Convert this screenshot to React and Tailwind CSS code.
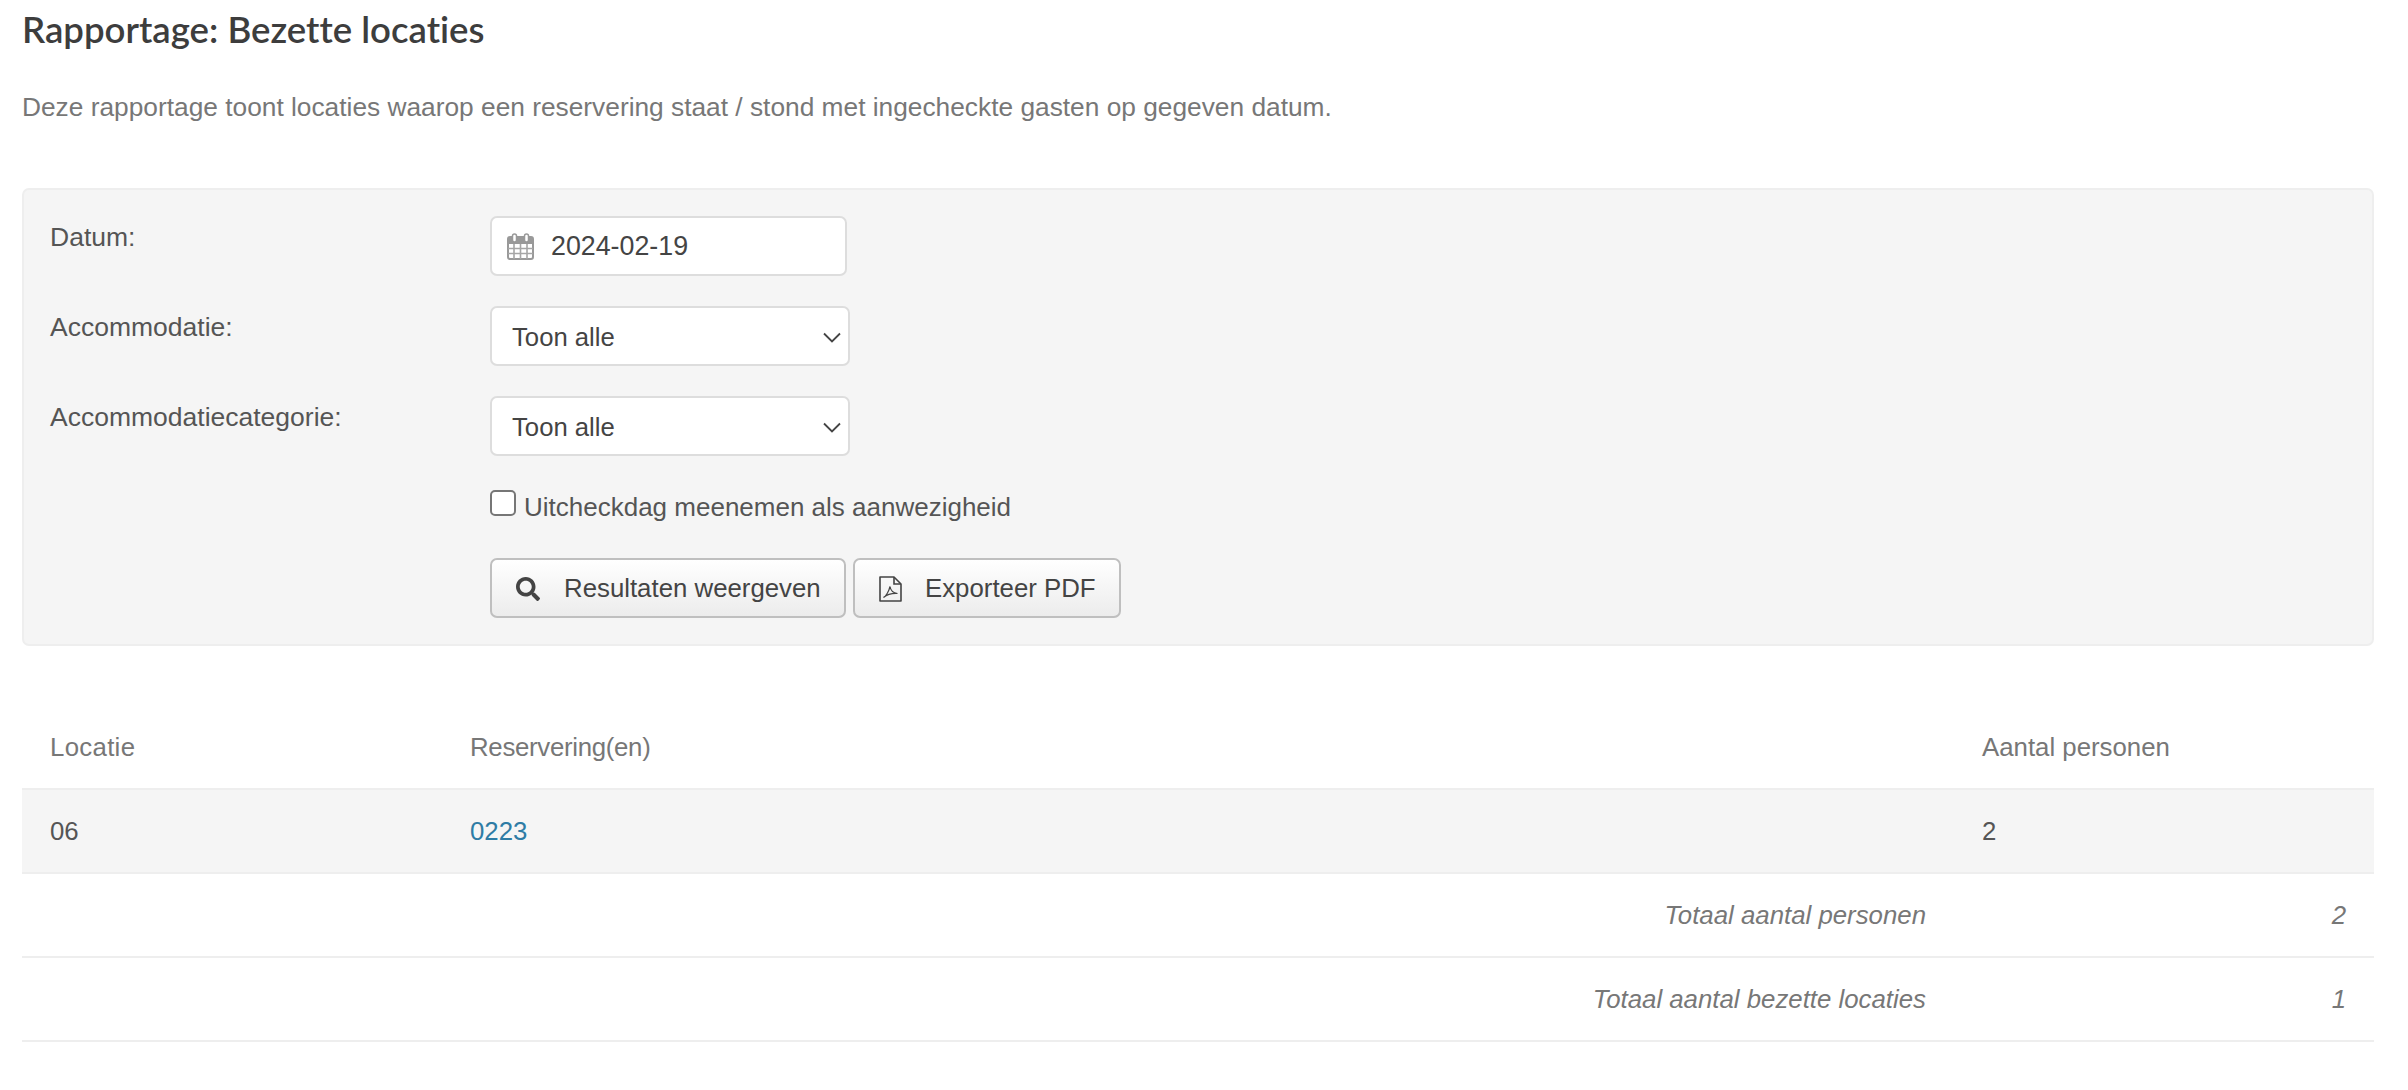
import React from "react";
import { FaSearch } from "react-icons/fa";

function Calendar() {
  return (
    <svg width="27" height="27" viewBox="0 0 27 27" className="shrink-0">
      <rect x="1" y="4" width="25" height="22" rx="2" fill="#fff" stroke="#999" strokeWidth="2" />
      <rect x="1" y="4" width="25" height="7" fill="#999" />
      <path d="M1 15.5H26M1 20.5H26M7 11V26M13.5 11V26M20 11V26" stroke="#a6a6a6" strokeWidth="1.6" fill="none" />
      <rect x="5.5" y="1" width="4" height="8" rx="2" fill="#fff" stroke="#999" strokeWidth="1.5" />
      <rect x="17.5" y="1" width="4" height="8" rx="2" fill="#fff" stroke="#999" strokeWidth="1.5" />
    </svg>
  );
}

function Pdf() {
  return (
    <svg width="23" height="26" viewBox="0 0 23 26" className="mr-[23px] shrink-0">
      <path d="M1 1H15L22 8V25H1Z" fill="none" stroke="#444" strokeWidth="1.6" strokeLinejoin="round" />
      <path d="M15 1V8H22" fill="none" stroke="#444" strokeWidth="1.6" />
      <path d="M4.5 21.5C7 20.5 10 15 11 10.5C11.5 14 14 17 18.5 17.5C14.5 17.3 8 18.5 4.5 21.5Z" fill="none" stroke="#444" strokeWidth="1.2" />
    </svg>
  );
}

function Chevron() {
  return (
    <svg width="18" height="11" viewBox="0 0 18 11" className="pointer-events-none absolute right-[7px] top-[24px]">
      <path d="M1 1.5L9 9.5L17 1.5" fill="none" stroke="#444" strokeWidth="1.8" />
    </svg>
  );
}

function SelectField({ label }) {
  return (
    <div className="mb-[30px] flex h-[60px]">
      <div className="w-[440px] pt-[3px] text-[26.5px] leading-[36px]">{label}</div>
      <div className="relative h-[60px] w-[360px] rounded-[7px] border-2 border-[#dddddd] bg-white pl-[20px] text-[25.7px] leading-[58px] text-[#444444]">
        Toon alle
        <Chevron />
      </div>
    </div>
  );
}

function Button({ icon, text, className }) {
  return (
    <button className={`flex h-[60px] items-center rounded-[7px] border-2 border-[#bfbfbf] bg-gradient-to-b from-white to-[#ececec] pt-[1px] text-[25.8px] text-[#444444] ${className}`}>
      {icon}
      <span>{text}</span>
    </button>
  );
}

export default function App() {
  return (
    <div className="min-h-[1090px] bg-white pl-[22px] pr-[34px] font-['Liberation_Sans',Arial,sans-serif] text-[25.8px] text-[#555555]">
      <h1 className="h-[60px] pt-[9px] font-['Lato',sans-serif] text-[36.6px] font-semibold leading-[40px] text-[#3d3d3d] [font-variant-ligatures:none]">
        Rapportage: Bezette locaties
      </h1>
      <p className="mt-[29px] h-[36px] text-[26.3px] leading-[36px] text-[#777777]">
        Deze rapportage toont locaties waarop een reservering staat / stond met ingecheckte gasten op gegeven datum.
      </p>
      <div className="mt-[63px] h-[458px] rounded-[7px] border-2 border-[#eeeeee] bg-[#f5f5f5] pl-[26px] pt-[26px]">
        <div className="mb-[30px] flex h-[60px]">
          <div className="w-[440px] pt-[3px] text-[26.5px] leading-[36px]">Datum:</div>
          <div className="flex h-[60px] w-[357px] items-center rounded-[7px] border-2 border-[#dddddd] bg-white pl-[15px] text-[26.8px] text-[#444444]">
            <Calendar />
            <span className="ml-[17px]">2024-02-19</span>
          </div>
        </div>
        <SelectField label="Accommodatie:" />
        <SelectField label="Accommodatiecategorie:" />
        <div className="ml-[440px] flex h-[42px] items-center">
          <span className="mt-[-8px] h-[26px] w-[26px] rounded-[5px] border-2 border-[#767676] bg-white" />
          <span className="ml-[8px] text-[26px] leading-[36px]">Uitcheckdag meenemen als aanwezigheid</span>
        </div>
        <div className="ml-[440px] mt-[30px] flex gap-[7px]">
          <Button className="w-[356px] pl-[24px]" text="Resultaten weergeven" icon={<FaSearch size={24} color="#444" className="mr-[24px]" />} />
          <Button className="w-[268px] pl-[24px]" text="Exporteer PDF" icon={<Pdf />} />
        </div>
      </div>
      <table className="mt-[59px] w-full table-fixed border-collapse">
        <colgroup>
          <col className="w-[420px]" />
          <col className="w-[1512px]" />
          <col />
        </colgroup>
        <thead>
          <tr className="h-[84px] text-left text-[#777777]">
            <th className="pl-[28px] pt-[2px] font-normal tracking-[0.3px]">Locatie</th>
            <th className="pl-[28px] pt-[2px] font-normal tracking-[-0.3px]">Reservering(en)</th>
            <th className="pl-[28px] pt-[2px] font-normal">Aantal personen</th>
          </tr>
        </thead>
        <tbody>
          <tr className="h-[84px] border-y-2 border-[#eeeeee] bg-[#f5f5f5]">
            <td className="pl-[28px] pt-[1px]">06</td>
            <td className="pl-[28px] pt-[1px] text-[#2e7ca5]">0223</td>
            <td className="pl-[28px] pt-[1px]">2</td>
          </tr>
          <tr className="h-[84px] border-b-2 border-[#eeeeee] italic text-[#777777]">
            <td colSpan={2} className="pr-[28px] text-right">Totaal aantal personen</td>
            <td className="pr-[28px] text-right">2</td>
          </tr>
          <tr className="h-[84px] border-b-2 border-[#eeeeee] italic text-[#777777]">
            <td colSpan={2} className="pr-[28px] text-right">Totaal aantal bezette locaties</td>
            <td className="pr-[28px] text-right">1</td>
          </tr>
        </tbody>
      </table>
    </div>
  );
}
